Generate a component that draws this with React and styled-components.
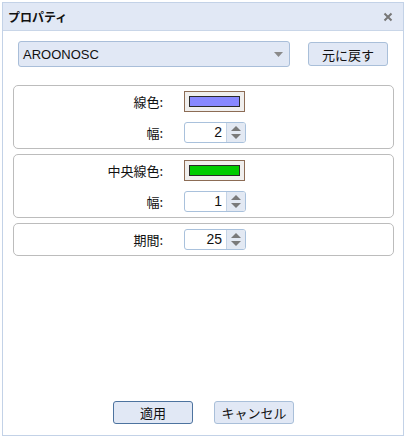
import styled, { createGlobalStyle } from "styled-components";

const GlobalStyle = createGlobalStyle`
  html, body {
    margin: 0;
    padding: 0;
    background: #ffffff;
  }
  body {
    font-family: "Noto Sans CJK JP", "Liberation Sans", sans-serif;
    font-size: 13px;
    color: #111;
  }
`;

const Dialog = styled.div`
  box-sizing: border-box;
  margin: 2px 0 0 2px;
  width: 402px;
  height: 434px;
  border: 1px solid #c3d2e7;
  background: #fff;
  display: flex;
  flex-direction: column;
`;

const Header = styled.div`
  height: 27px;
  flex: none;
  background: #e1e8f5;
  border-bottom: 1px solid #c9d6e8;
  display: flex;
  align-items: center;
  justify-content: space-between;
  padding: 0 10px 0 5px;
`;

const Title = styled.div`
  font-weight: bold;
  font-size: 12px;
  color: #111;
`;

const Close = styled.button`
  border: 0;
  background: none;
  padding: 0;
  width: 10px;
  height: 10px;
  display: flex;
`;

const Body = styled.div`
  flex: 1;
  display: flex;
  flex-direction: column;
  padding: 10px 9px 11px 10px;
`;

const TopRow = styled.div`
  display: flex;
  align-items: center;
  gap: 18px;
  padding-left: 5px;
  margin-bottom: 18px;
`;

const Select = styled.div`
  box-sizing: border-box;
  width: 272px;
  height: 26px;
  border: 1px solid #a9bed9;
  border-radius: 3px;
  background: #e1e8f5;
  display: flex;
  align-items: center;
  justify-content: space-between;
  padding: 0 6px 0 4px;
  font-family: "Liberation Sans", sans-serif;
  font-size: 13px;
  color: #111;
`;

const Button = styled.button`
  box-sizing: border-box;
  width: 80px;
  height: ${(p) => (p.$tall ? 24 : 23)}px;
  border: 1px solid ${(p) => (p.$primary ? "#4d739f" : "#a9bfd9")};
  border-radius: 3px;
  background: #e1e8f5;
  font-family: "Noto Sans CJK JP", sans-serif;
  font-size: 13px;
  color: #111;
  padding: 0;
`;

const Group = styled.div`
  box-sizing: border-box;
  border: 1px solid #bcbcbc;
  border-radius: 5px;
  padding: 5px 0;
  display: grid;
  grid-template-columns: 149px auto;
  column-gap: 21px;
  row-gap: 10px;
  align-items: center;
  margin-bottom: 5px;
`;

const Label = styled.div`
  text-align: right;
  line-height: 21px;
`;

const Swatch = styled.div`
  box-sizing: border-box;
  width: 61px;
  height: 21px;
  border: 1px solid #8c6c55;
  background: #f0efee;
  padding: 4px;
  display: flex;
`;

const SwatchFill = styled.div`
  flex: 1;
  border: 1px solid #2a2a2a;
  background: ${(p) => p.$color};
`;

const Spinner = styled.div`
  box-sizing: border-box;
  width: 62px;
  height: 21px;
  border: 1px solid #a9c1dc;
  border-radius: 3px;
  display: flex;
  overflow: hidden;
`;

const SpinValue = styled.div`
  flex: 1;
  text-align: right;
  padding-right: 4px;
  line-height: 19px;
  font-family: "Liberation Sans", sans-serif;
  font-size: 14px;
  color: #111;
`;

const SpinArrows = styled.div`
  width: 18px;
  background: #e3e9f3;
  border-left: 1px solid #c5d4e6;
  display: flex;
  flex-direction: column;
  align-items: center;
  justify-content: space-around;
  padding: 1px 0;
`;

const Footer = styled.div`
  margin-top: auto;
  display: flex;
  justify-content: center;
  gap: 21px;
`;

const Tri = ({ down, w = 9, h = 5, color = "#7a7a7a" }) => (
  <svg width={w} height={h} viewBox={`0 0 ${w} ${h}`}>
    <polygon
      points={down ? `0,0 ${w},0 ${w / 2},${h}` : `0,${h} ${w},${h} ${w / 2},0`}
      fill={color}
    />
  </svg>
);

const Spin = ({ value }) => (
  <Spinner>
    <SpinValue>{value}</SpinValue>
    <SpinArrows>
      <Tri w={10} h={5} />
      <Tri down w={10} h={5} />
    </SpinArrows>
  </Spinner>
);

export default function App() {
  return (
    <>
      <GlobalStyle />
      <Dialog>
        <Header>
          <Title>プロパティ</Title>
          <Close aria-label="close">
            <svg width="10" height="10" viewBox="0 0 10 10">
              <path d="M1.5 1.5 L8.5 8.5 M8.5 1.5 L1.5 8.5" stroke="#777" strokeWidth="2" />
            </svg>
          </Close>
        </Header>
        <Body>
          <TopRow>
            <Select>
              <span>AROONOSC</span>
              <Tri down w={9} h={5} color="#8a8a8a" />
            </Select>
            <Button $tall>元に戻す</Button>
          </TopRow>
          <Group>
            <Label>線色:</Label>
            <Swatch>
              <SwatchFill $color="#8888ff" />
            </Swatch>
            <Label>幅:</Label>
            <Spin value="2" />
          </Group>
          <Group>
            <Label>中央線色:</Label>
            <Swatch>
              <SwatchFill $color="#00cc00" />
            </Swatch>
            <Label>幅:</Label>
            <Spin value="1" />
          </Group>
          <Group>
            <Label>期間:</Label>
            <Spin value="25" />
          </Group>
          <Footer>
            <Button $primary>適用</Button>
            <Button>キャンセル</Button>
          </Footer>
        </Body>
      </Dialog>
    </>
  );
}
